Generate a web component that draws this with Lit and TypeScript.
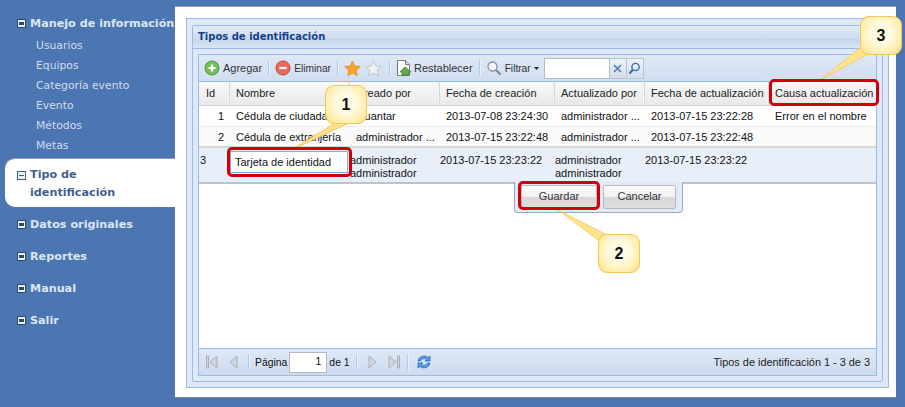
import { LitElement, html, css, svg } from "lit";
import { customElement } from "lit/decorators.js";

const sep = html`<span class="sep"></span>`;
const starOrange = svg`<path d="M8.500 1l2.300 5 5.400.6-4 3.700 1.100 5.400-4.800-2.700-4.800 2.700 1.100-5.400-4-3.700 5.400-.6z" fill="#f9a52c" stroke="#e08a1a" stroke-width=".8"/>`;
const starGrey = svg`<path d="M8.500 1l2.300 5 5.400.6-4 3.700 1.100 5.400-4.800-2.700-4.800 2.700 1.100-5.400-4-3.700 5.400-.6z" fill="#eef0f3" stroke="#bcc3cd" stroke-width=".9"/>`;

@customElement("app-root")
export class AppRoot extends LitElement {
  static styles = css`
    :host { display: block; width: 905px; height: 407px; position: relative; overflow: hidden; background: #4c76b1; font-family: "Liberation Sans", Arial, sans-serif; font-size: 11px; color: #111; }
    .page { display: flex; height: 407px; }
    .side { width: 175px; flex: none; padding-top: 15px; box-sizing: border-box; font-family: "DejaVu Sans", Verdana, sans-serif; overflow: hidden; }
    .head { display: flex; align-items: flex-start; gap: 4px; padding-left: 17px; font-weight: bold; font-size: 11.2px; line-height: 18px; color: #dbe6f4; white-space: nowrap; height: 32px; box-sizing: border-box; }
    .box { flex: none; width: 9px; height: 9px; margin-top: 4px; background: #e8eef6; border: 1px solid #2d4a70; box-sizing: border-box; position: relative; }
    .box::after { content: ""; position: absolute; left: 1px; right: 1px; top: 2px; height: 3px; background: #2d4a70; }
    .items { display: flex; flex-direction: column; padding-left: 36px; margin-top: -11px; }
    .items span { height: 20px; line-height: 20px; font-size: 10.8px; color: #d0ddee; }
    .active { margin: 2px 0 9px 5px; height: 49px; background: #fff; border-radius: 10px 0 0 10px; padding: 7px 0 0 12px; box-sizing: border-box; display: flex; gap: 4px; font-weight: bold; font-size: 11.2px; line-height: 18px; color: #3f5f8f; border-top: 1px solid #8a9cb5; }
    .active .box { background: #eef2f8; border-color: #3f5f8f; margin-top: 5px; }
    .active .box::after { top: 3px; height: 1px; background: #3f5f8f; }
    .white { width: 721px; height: 391px; margin-top: 6px; background: #fff; padding: 11px 7px 9px 11px; box-sizing: border-box; border-top: 1px solid #8a9cb5; box-shadow: 0 1px 0 #8090a8; }
    .win { height: 100%; box-sizing: border-box; border: 1px solid #99bbe8; background: #dfe8f6; padding: 6px 5px 5px 5px; }
    .panel { height: 100%; box-sizing: border-box; border: 1px solid #99bbe8; display: flex; flex-direction: column; background: #dfe8f6; border-radius: 2px; }
    .title { height: 22px; flex: none; line-height: 21px; padding-left: 5px; font-weight: bold; color: #15428b; font-family: "DejaVu Sans", Verdana, sans-serif; font-size: 10px; background: linear-gradient(#e3ecf8, #cddcf0 55%, #c4d5ec 60%, #d8e4f4); border-bottom: 1px solid #99bbe8; white-space: nowrap; }
    .grid { flex: 1; margin: 5px; border: 1px solid #99bbe8; display: flex; flex-direction: column; background: #fff; min-height: 0; position: relative; }
    .tb { height: 27px; flex: none; display: flex; align-items: center; padding-left: 5px; background: linear-gradient(#dfe9f6, #d0def0); border-bottom: 1px solid #99bbe8; color: #333; box-sizing: border-box; }
    .t { display: inline-flex; align-items: center; gap: 3px; white-space: nowrap; }
    .t2 { gap: 2px; }
    .narrow { font-size: 10.2px; }
    .sep { width: 1px; height: 16px; background: #aeccf0; box-shadow: 1px 0 0 #e8f0fa; margin: 0 6px; flex: none; }
    .star2 { margin: 0 1px 0 4px; }
    .search { width: 66px; height: 21px; background: #fff; border: 1px solid #b5b8c8; box-sizing: border-box; margin-left: 5px; }
    .sbtn { width: 17px; height: 21px; border: 1px solid #b5c2d2; border-left: none; box-sizing: border-box; background: linear-gradient(#eef2f7, #d5dde8); display: flex; align-items: center; justify-content: center; }
    .cols { display: grid; grid-template-columns: 31px 120px 90px 115px 90px 124px 108px; }
    .hdr { height: 24px; flex: none; background: linear-gradient(#f9f9f9, #e8e8e8); color: #222; }
    .hdr span { line-height: 23px; padding-left: 6px; border-right: 1px solid #d8d8d8; white-space: nowrap; overflow: hidden; box-shadow: inset -1px 0 0 #f4f4f4; border-bottom: 1px solid #d0d0d0; }
    .hdr span:first-child { padding-left: 7px; }
    .row { height: 21px; border-bottom: 1px solid #ededed; box-sizing: border-box; }
    .row.alt { background: #fafafa; border-bottom: 2px solid #d8d8d8; }
    .row span { line-height: 20px; padding-left: 6px; white-space: nowrap; overflow: hidden; }
    .row span.id { text-align: right; padding: 0 6px 0 0; }
    .row2 { height: 34px; background: #e8eff9; border-bottom: 2px solid #bcc4cf; box-sizing: content-box; }
    .row2 > span { padding-top: 6px; line-height: 13px; white-space: nowrap; overflow: hidden; }
    .row2 > span:first-child { padding-left: 1px; }
    .input { margin-top: 3px; width: 118px; height: 22px; box-sizing: border-box; border: 1px solid #7eadd9; background: #fff; line-height: 20px; padding-left: 4px; }
    .spacer { flex: 1; }
    .foot { height: 27px; flex: none; display: flex; align-items: center; padding: 0 6px 0 6px; background: linear-gradient(#dfe9f6, #ccdbee); border-top: 1px solid #99bbe8; box-sizing: border-box; white-space: nowrap; }
    .small { font-size: 10.4px; }
    .pg { width: 38px; height: 21px; margin: 0 2px; border: 1px solid #b5b8c8; background: #fff; box-sizing: border-box; text-align: right; line-height: 17px; padding-right: 5px; }
    .info { margin-left: auto; color: #222; font-size: 10.9px; }
    .m11 { margin-left: 11px; }
    .m10 { margin-left: 10px; }
    .m5 { margin-left: 5px; }
    .m2 { margin-left: 2px; }
    .ed { position: absolute; left: 315px; top: 127px; width: 169px; height: 31px; box-sizing: border-box; background: #e2eaf7; border: 1px solid #99a9bf; border-top: none; border-radius: 0 0 4px 4px; display: flex; gap: 6px; padding: 3px 0 0 6px; }
    .btn { height: 24px; box-sizing: border-box; border: 1px solid #b8bcc2; border-radius: 2px; background: linear-gradient(#fbfbfb 0, #f1f1f1 50%, #d8d8d8 52%, #dedede); text-align: center; line-height: 20px; color: #333; }
    .b1 { width: 76px; }
    .b2 { width: 73px; }
    .red { position: absolute; box-sizing: border-box; border: 3px solid #d0000a; border-radius: 5px; }
    .r1 { left: 227px; top: 147px; width: 125px; height: 30px; }
    .r2 { left: 518px; top: 181px; width: 82px; height: 29px; }
    .r3 { left: 769px; top: 79px; width: 110px; height: 27px; }
    .call { position: absolute; width: 42px; height: 39px; box-sizing: border-box; border: 1px solid #f5c65a; border-radius: 9px; background: radial-gradient(ellipse at 50% 45%, #fffbe2 35%, #ffeda8 75%, #ffd768); font: bold 16px/37px "Liberation Sans", Arial, sans-serif; color: #111; text-align: center; }
    .c1 { left: 325px; top: 85px; }
    .c2 { left: 598px; top: 234px; }
    .c3 { left: 860px; top: 16px; }
    .tails { position: absolute; left: 0; top: 0; width: 905px; height: 407px; pointer-events: none; }
  `;

  render() {
    return html`
      <div class="page">
        <nav class="side">
          <div class="head"><i class="box"></i>Manejo de información</div>
          <div class="items">
            <span>Usuarios</span><span>Equipos</span><span>Categoría evento</span><span>Evento</span><span>Métodos</span><span>Metas</span>
          </div>
          <div class="active"><i class="box"></i><div>Tipo de<br />identificación</div></div>
          <div class="head"><i class="box"></i>Datos originales</div>
          <div class="head"><i class="box"></i>Reportes</div>
          <div class="head"><i class="box"></i>Manual</div>
          <div class="head"><i class="box"></i>Salir</div>
        </nav>
        <main class="white">
          <div class="win">
            <div class="panel">
              <div class="title">Tipos de identificación</div>
              <div class="grid">
                <div class="tb">
                  <span class="t"><svg width="16" height="16" viewBox="0 0 16 16"><circle cx="8" cy="8" r="7" fill="#74c05c" stroke="#4b9638"/><path d="M8 4.500v7M4.500 8h7" stroke="#fff" stroke-width="2.200"/></svg>Agregar</span>${sep}
                  <span class="t"><svg width="16" height="16" viewBox="0 0 16 16"><circle cx="8" cy="8" r="7" fill="#ea6a5a" stroke="#c8452f"/><path d="M4.500 8h7" stroke="#fff" stroke-width="2.200"/></svg><span class="narrow">Eliminar</span></span>${sep}
                  <svg width="17" height="17" viewBox="0 0 17 17">${starOrange}</svg>
                  <svg class="star2" width="17" height="17" viewBox="0 0 17 17">${starGrey}</svg>${sep}
                  <span class="t t2"><svg width="16" height="18" viewBox="0 0 16 18"><path d="M1.500 1.500h8l4 4v11h-12z" fill="#fbfbfb" stroke="#777"/><path d="M9.500 1.500v4h4" fill="#ddd" stroke="#777"/><path d="M6 16v-3H4l5-5 6 5h-2v3z" fill="#6aa84f" stroke="#3f7d2f" stroke-width=".8"/></svg>Restablecer</span>${sep}
                  <span class="t"><svg width="16" height="16" viewBox="0 0 16 16"><circle cx="6.500" cy="6.500" r="4.500" fill="#f2f5f8" stroke="#8b939c" stroke-width="1.300"/><path d="M10 10l4.500 4.500" stroke="#7c848c" stroke-width="2"/></svg><span class="narrow">Filtrar</span><svg width="5" height="3" viewBox="0 0 5 3"><path d="M0 0h5L2.500 3z" fill="#222"/></svg></span>
                  <span class="search"></span>
                  <span class="sbtn"><svg width="9" height="9" viewBox="0 0 9 9"><path d="M1 1l7 7M8 1L1 8" stroke="#4a7cb5" stroke-width="1.600"/></svg></span>
                  <span class="sbtn"><svg width="13" height="13" viewBox="0 0 13 13"><circle cx="7.500" cy="5" r="3.600" fill="#e4f0fb" stroke="#2f6eb5" stroke-width="1.400"/><path d="M5 7.500L1.500 11.500" stroke="#2f6eb5" stroke-width="2"/></svg></span>
                </div>
                <div class="cols hdr">
                  <span>Id</span><span>Nombre</span><span>Creado por</span><span>Fecha de creación</span><span>Actualizado por</span><span>Fecha de actualización</span><span>Causa actualización</span>
                </div>
                <div class="cols row">
                  <span class="id">1</span><span>Cédula de ciudadanía</span><span>Guantar</span><span>2013-07-08 23:24:30</span><span>administrador ...</span><span>2013-07-15 23:22:28</span><span>Error en el nombre</span>
                </div>
                <div class="cols row alt">
                  <span class="id">2</span><span>Cédula de extranjería</span><span>administrador ...</span><span>2013-07-15 23:22:48</span><span>administrador ...</span><span>2013-07-15 23:22:48</span><span></span>
                </div>
                <div class="cols row2">
                  <span>3</span><div><div class="input">Tarjeta de identidad</div></div><span>administrador<br />administrador</span><span>2013-07-15 23:23:22</span><span>administrador<br />administrador</span><span>2013-07-15 23:23:22</span><span></span>
                </div>
                <div class="spacer"></div>
                <div class="foot">
                  <svg width="13" height="14" viewBox="0 0 13 14"><path d="M1.500 1h2v12h-2z" fill="#d2d6dc" stroke="#aab0b8"/><path d="M12 1v12L5 7z" fill="#d2d6dc" stroke="#aab0b8"/></svg>
                  <svg class="m11" width="9" height="14" viewBox="0 0 9 14"><path d="M8 1v12L1 7z" fill="#d2d6dc" stroke="#aab0b8"/></svg>
                  <span class="sep m10"></span><span class="small">Página</span><span class="pg">1</span><span class="small">de 1</span>${sep}
                  <svg class="m5" width="9" height="14" viewBox="0 0 9 14"><path d="M1 1v12l7-6z" fill="#d2d6dc" stroke="#aab0b8"/></svg>
                  <svg class="m11" width="13" height="14" viewBox="0 0 13 14"><path d="M1 1v12l7-6z" fill="#d2d6dc" stroke="#aab0b8"/><path d="M9.500 1h2v12h-2z" fill="#d2d6dc" stroke="#aab0b8"/></svg>
                  ${sep}
                  <svg class="m2" width="16" height="16" viewBox="0 0 16 16"><path d="M2 7a6 5.500 0 0 1 10-3.500L14 2v5H9l2-1.500A4 3.500 0 0 0 4.500 7z" fill="#5aa0e0" stroke="#2a6cb5" stroke-width=".8"/><path d="M14 9a6 5.500 0 0 1-10 3.500L2 14V9h5l-2 1.500A4 3.500 0 0 0 11.500 9z" fill="#5aa0e0" stroke="#2a6cb5" stroke-width=".8"/></svg>
                  <span class="info">Tipos de identificación 1 - 3 de 3</span>
                </div>
                <div class="ed">
                  <div class="btn b1">Guardar</div>
                  <div class="btn b2">Cancelar</div>
                </div>
              </div>
            </div>
          </div>
        </main>
      </div>
      <svg class="tails" viewBox="0 0 905 407">
        <path d="M337 122L291 150L351 122z" fill="#ffe48c" stroke="#f5c65a"/>
        <path d="M558 210L602 243L609 236z" fill="#ffe48c" stroke="#f5c65a" stroke-width=".8"/>
        <path d="M822 79L861 47L868 54z" fill="#ffe48c" stroke="#f5c65a" stroke-width=".8"/>
      </svg>
      <div class="red r1"></div>
      <div class="red r2"></div>
      <div class="red r3"></div>
      <div class="call c1">1</div>
      <div class="call c2">2</div>
      <div class="call c3">3</div>
    `;
  }
}
